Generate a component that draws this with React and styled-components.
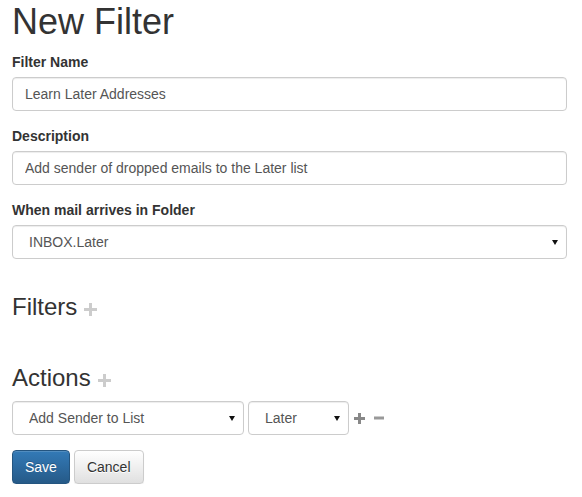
import React from 'react';
import styled, { createGlobalStyle } from 'styled-components';

const GlobalStyle = createGlobalStyle`
  * { box-sizing: border-box; }
  body {
    margin: 0;
    background: #fff;
    color: #333;
    font-family: "Liberation Sans", Arial, Helvetica, sans-serif;
    font-size: 14px;
    line-height: 1.42857143;
  }
`;

const Page = styled.div`
  padding: 2px 15px 0 12px;
`;

const Title = styled.h1`
  margin: 0 0 10px;
  font-size: 36px;
  font-weight: 500;
  line-height: 1.1;
  color: #333;
`;

const Form = styled.form`
  display: flex;
  flex-direction: column;
`;

const FormGroup = styled.div`
  margin-bottom: 15px;
`;

const Label = styled.label`
  display: block;
  margin-bottom: 5px;
  font-weight: bold;
  color: #333;
`;

const fieldStyle = `
  display: block;
  width: 100%;
  height: 34px;
  padding: 6px 12px;
  font-family: "Liberation Sans", Arial, Helvetica, sans-serif;
  font-size: 14px;
  line-height: 1.42857143;
  color: #555;
  background: #fff;
  border: 1px solid #ccc;
  border-radius: 4px;
  box-shadow: inset 0 1px 1px rgba(0, 0, 0, 0.075);
  outline: none;
`;

const Input = styled.input`
  ${fieldStyle}
`;

const SelectWrap = styled.div`
  position: relative;
  width: ${p => p.$width || '100%'};
  flex: none;
`;

const Select = styled.select`
  ${fieldStyle}
  appearance: none;
  -webkit-appearance: none;
  padding-left: 16px;
  padding-right: 24px;
`;

const Caret = styled.span`
  position: absolute;
  right: 9px;
  top: 15px;
  width: 0;
  height: 0;
  border-left: 3px solid transparent;
  border-right: 3px solid transparent;
  border-top: 5px solid #111;
  pointer-events: none;
`;

const SectionTitle = styled.h3`
  margin: 20px 0 ${p => p.$after}px;
  font-size: 24px;
  font-weight: 500;
  line-height: 1.1;
  color: #333;
`;

const HeadingIcon = styled.span`
  display: inline-block;
  margin-left: 7px;
  vertical-align: -1px;
  line-height: 0;
  color: #ccc;
  cursor: pointer;
`;

const EmptyList = styled.div`
  min-height: 15px;
`;

const ActionRow = styled.div`
  display: flex;
  align-items: center;
  gap: 4px;
  margin-bottom: 15px;
`;

const IconButton = styled.span`
  display: inline-flex;
  align-items: center;
  margin-left: ${p => p.$ml || 0}px;
  color: ${p => p.$color};
  cursor: pointer;
`;

const Buttons = styled.div`
  display: flex;
  gap: 4px;
`;

const Button = styled.button`
  display: inline-block;
  height: 34px;
  padding: 6px 12px;
  font-family: "Liberation Sans", Arial, Helvetica, sans-serif;
  font-size: 14px;
  line-height: 1.42857143;
  border: 1px solid;
  border-radius: 4px;
  cursor: pointer;
  box-shadow: inset 0 1px 0 rgba(255, 255, 255, 0.15), 0 1px 1px rgba(0, 0, 0, 0.075);
`;

const PrimaryButton = styled(Button)`
  color: #fff;
  text-shadow: 0 -1px 0 rgba(0, 0, 0, 0.2);
  background: linear-gradient(to bottom, #337ab7 0%, #265a88 100%);
  border-color: #245580;
`;

const DefaultButton = styled(Button)`
  color: #333;
  text-shadow: 0 1px 0 #fff;
  background: linear-gradient(to bottom, #fff 0%, #e0e0e0 100%);
  border-color: #ccc;
`;

const PlusIcon = ({ size = 13, stroke = 3 }) => (
  <svg width={size} height={size} viewBox={`0 0 ${size} ${size}`} fill="currentColor">
    <rect x={(size - stroke) / 2} y="0" width={stroke} height={size} />
    <rect x="0" y={(size - stroke) / 2} width={size} height={stroke} />
  </svg>
);

const MinusIcon = ({ size = 11, stroke = 3 }) => (
  <svg width={size} height={size} viewBox={`0 0 ${size} ${size}`} fill="currentColor">
    <rect x="0" y={(size - stroke) / 2} width={size} height={stroke} />
  </svg>
);

const DropDown = ({ width, value, options }) => (
  <SelectWrap $width={width}>
    <Select defaultValue={value}>
      {options.map(o => <option key={o}>{o}</option>)}
    </Select>
    <Caret />
  </SelectWrap>
);

const App = () => {
  return (
    <Page>
      <GlobalStyle />
      <Title>New Filter</Title>
      <Form onSubmit={e => e.preventDefault()}>
        <FormGroup>
          <Label htmlFor="name">Filter Name</Label>
          <Input id="name" defaultValue="Learn Later Addresses" />
        </FormGroup>
        <FormGroup>
          <Label htmlFor="desc">Description</Label>
          <Input id="desc" defaultValue="Add sender of dropped emails to the Later list" />
        </FormGroup>
        <FormGroup>
          <Label>When mail arrives in Folder</Label>
          <DropDown value="INBOX.Later" options={['INBOX', 'INBOX.Later']} />
        </FormGroup>

        <SectionTitle $after={10}>
          Filters
          <HeadingIcon><PlusIcon /></HeadingIcon>
        </SectionTitle>
        <EmptyList />

        <SectionTitle $after={10}>
          Actions
          <HeadingIcon><PlusIcon /></HeadingIcon>
        </SectionTitle>
        <ActionRow>
          <DropDown width="232px" value="Add Sender to List" options={['Add Sender to List', 'Move to Folder']} />
          <DropDown width="101px" value="Later" options={['Later', 'Now']} />
          <IconButton $color="#888" $ml={1}><PlusIcon size={11} /></IconButton>
          <IconButton $color="#999" $ml={5}><MinusIcon size={10} /></IconButton>
        </ActionRow>

        <Buttons>
          <PrimaryButton type="submit">Save</PrimaryButton>
          <DefaultButton type="button">Cancel</DefaultButton>
        </Buttons>
      </Form>
    </Page>
  );
};

export default App;
